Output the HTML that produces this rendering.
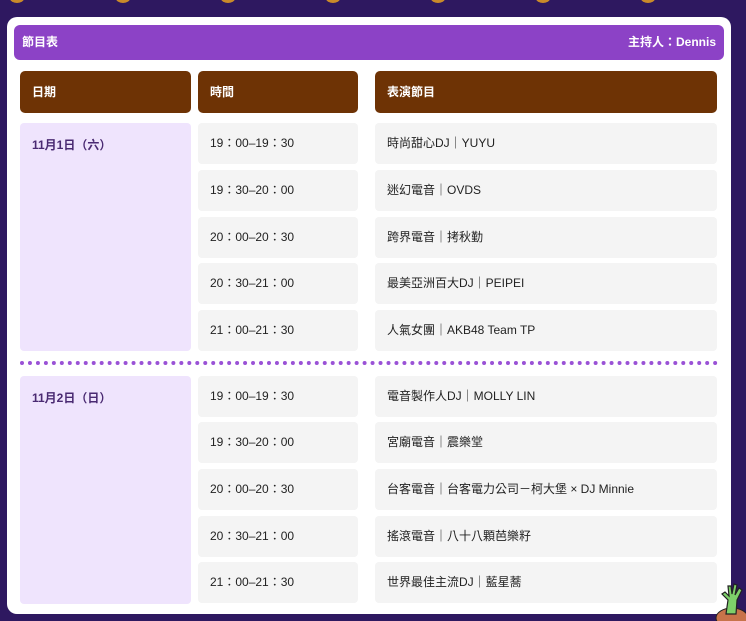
<!DOCTYPE html>
<html><head><meta charset="utf-8"><style>
*{margin:0;padding:0;box-sizing:border-box}
body{width:746px;height:621px;overflow:hidden;background:#2e1860;font-family:"Liberation Sans","Noto Sans CJK TC",sans-serif;position:relative}
.dot{position:absolute;top:-6px;width:14px;height:9px;border-radius:50%;background:#c98a2a}
.card{position:absolute;left:7px;top:17px;width:724px;height:597px;background:#fff;border-radius:10px}
.hdr{position:absolute;left:14px;top:25px;width:710px;height:35px;background:#8c42c6;border-radius:6px;color:#fff;font-weight:bold;font-size:12px;line-height:35px;padding:0 8px}
.hdr span{float:right}
.th{position:absolute;top:71px;height:42px;background:#6e3305;border-radius:5px;color:#fff;font-weight:bold;font-size:12px;line-height:42px;padding-left:12px}
.c{position:absolute;height:41px;background:#f4f4f4;border-radius:4px;font-size:12px;color:#222;line-height:41px;padding-left:12px}
.d{position:absolute;left:20px;width:171px;background:#efe4fd;border-radius:4px;color:#4a2a72;font-weight:bold;font-size:12px;padding:13px 12px}
.sep{position:absolute;left:20px;width:698px;top:361px;border-top:4px dotted #9a52d6}
</style></head><body>
<div class="dot" style="left:116px"></div><div class="dot" style="left:221px"></div><div class="dot" style="left:326px"></div><div class="dot" style="left:431px"></div><div class="dot" style="left:536px"></div><div class="dot" style="left:641px"></div><div class="dot" style="left:10px"></div>
<div class="card"></div>
<div class="hdr">節目表<span>主持人：Dennis</span></div>
<div class="th" style="left:20px;width:171px">日期</div>
<div class="th" style="left:198px;width:160px">時間</div>
<div class="th" style="left:375px;width:342px">表演節目</div>
<div class="d" style="top:123px;height:228px">11月1日（六）</div>
<div class="c" style="left:198px;width:160px;top:123px">19：00–19：30</div><div class="c" style="left:375px;width:342px;top:123px">時尚甜心DJ｜YUYU</div>
<div class="c" style="left:198px;width:160px;top:170px">19：30–20：00</div><div class="c" style="left:375px;width:342px;top:170px">迷幻電音｜OVDS</div>
<div class="c" style="left:198px;width:160px;top:217px">20：00–20：30</div><div class="c" style="left:375px;width:342px;top:217px">跨界電音｜拷秋勤</div>
<div class="c" style="left:198px;width:160px;top:263px">20：30–21：00</div><div class="c" style="left:375px;width:342px;top:263px">最美亞洲百大DJ｜PEIPEI</div>
<div class="c" style="left:198px;width:160px;top:310px">21：00–21：30</div><div class="c" style="left:375px;width:342px;top:310px">人氣女團｜AKB48 Team TP</div>
<div class="sep"></div>
<div class="d" style="top:376px;height:228px">11月2日（日）</div>
<div class="c" style="left:198px;width:160px;top:376px">19：00–19：30</div><div class="c" style="left:375px;width:342px;top:376px">電音製作人DJ｜MOLLY LIN</div>
<div class="c" style="left:198px;width:160px;top:422px">19：30–20：00</div><div class="c" style="left:375px;width:342px;top:422px">宮廟電音｜震樂堂</div>
<div class="c" style="left:198px;width:160px;top:469px">20：00–20：30</div><div class="c" style="left:375px;width:342px;top:469px">台客電音｜台客電力公司－柯大堡 × DJ Minnie</div>
<div class="c" style="left:198px;width:160px;top:516px">20：30–21：00</div><div class="c" style="left:375px;width:342px;top:516px">搖滾電音｜八十八顆芭樂籽</div>
<div class="c" style="left:198px;width:160px;top:562px">21：00–21：30</div><div class="c" style="left:375px;width:342px;top:562px">世界最佳主流DJ｜藍星蕎</div>
<svg style="position:absolute;left:714px;top:580px" width="32" height="41" viewBox="0 0 32 41">
<ellipse cx="18" cy="38" rx="16" ry="10" fill="#c8734a" stroke="#222"/>
<path d="M12 34 L14 20 L8 14 L11 12 L15 16 L14 6 L17 6 L18 14 L20 4 L23 5 L21 15 L25 8 L28 10 L23 20 L22 34 Z" fill="#7ed06a" stroke="#222" stroke-width="1.2"/>
</svg>
</body></html>
